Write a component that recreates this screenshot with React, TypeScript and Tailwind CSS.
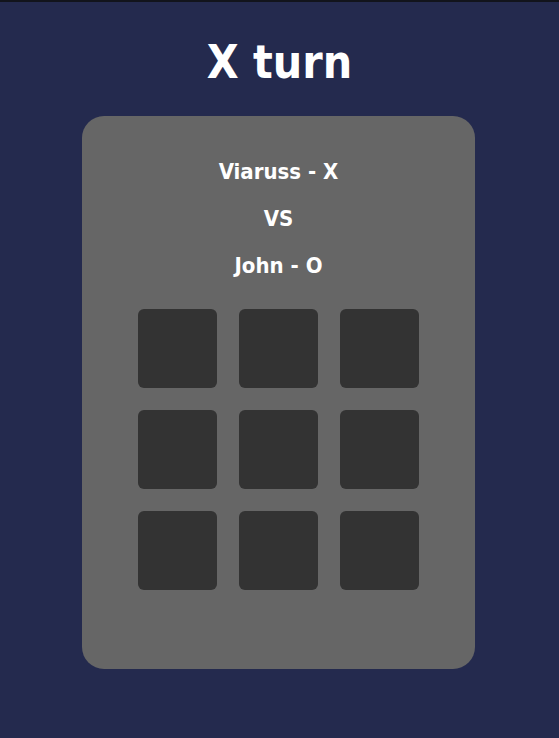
import React from 'react';

const cells = Array.from({ length: 9 }, (_, i) => i);

export default function App() {
    return (
        <div className="min-h-[738px] bg-[#242a4e] border-t-2 border-[#12141c] flex flex-col items-center" style={{ fontFamily: '"DejaVu Sans Condensed", "DejaVu Sans", Verdana, sans-serif' }}>
            <h1 className="mt-[30px] text-[46px] leading-[60px] font-bold text-white">X turn</h1>
            <div className="mt-[24px] mr-[2px] w-[393px] h-[553px] bg-[#666666] rounded-[22px] flex flex-col items-center pt-[42px]">
                <p className="text-[22px] leading-[28px] font-bold text-white">Viaruss - X</p>
                <p className="mt-[19px] text-[22px] leading-[28px] font-bold text-white">VS</p>
                <p className="mt-[19px] text-[22px] leading-[28px] font-bold text-white">John - O</p>
                <div className="mt-[29px] grid grid-cols-3 gap-[22px]">
                    {cells.map(c => (
                        <div key={c} className="w-[79px] h-[79px] bg-[#333333] rounded-[6px]" />
                    ))}
                </div>
            </div>
        </div>
    );
}
